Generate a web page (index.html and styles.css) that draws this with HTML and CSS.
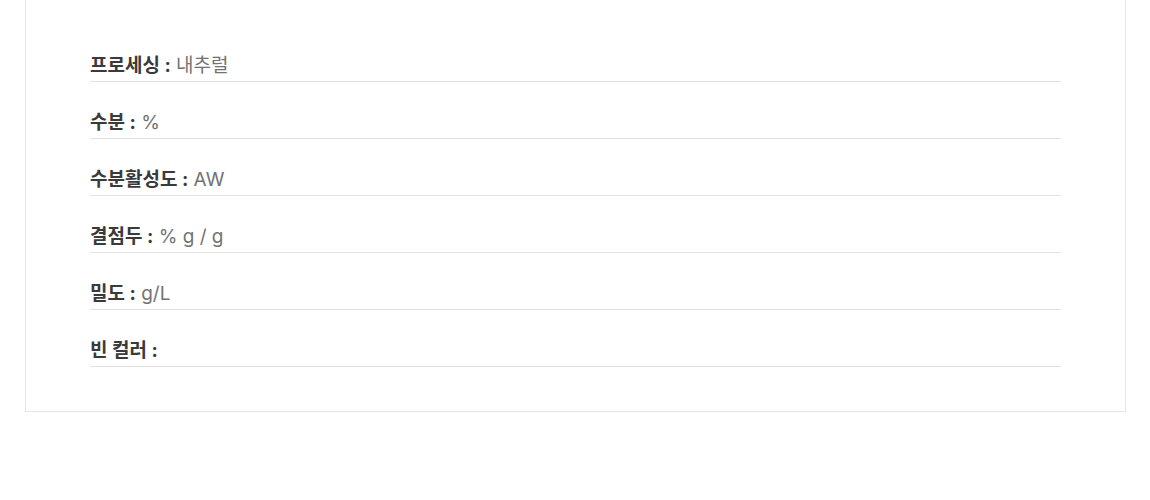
FILE: index.html
```html
<!DOCTYPE html>
<html lang="ko">
<head>
<meta charset="utf-8">
<link rel="stylesheet" href="styles.css">
</head>
<body>
<div class="card">
  <ul class="spec-list">
    <li class="spec-row"><span class="label">프로세싱 :</span> <span class="value">내추럴</span></li>
    <li class="spec-row"><span class="label">수분 :</span> <span class="value">%</span></li>
    <li class="spec-row"><span class="label">수분활성도 :</span> <span class="value">AW</span></li>
    <li class="spec-row"><span class="label">결점두 :</span> <span class="value">% g / g</span></li>
    <li class="spec-row"><span class="label">밀도 :</span> <span class="value">g/L</span></li>
    <li class="spec-row"><span class="label">빈 컬러 :</span> <span class="value"></span></li>
  </ul>
</div>
</body>
</html>
```

FILE: styles.css
```css
html, body {
  margin: 0;
  padding: 0;
  background: #ffffff;
}

body {
  font-family: "Inter", "Noto Sans CJK KR", "Noto Sans", sans-serif;
  color: #333333;
}

.card {
  margin: 0 24px 0 25px;
  border: 1px solid #e6e6e6;
  border-top: 0;
  padding: 25px 64px 44px 64px;
}

.spec-list {
  list-style: none;
  margin: 0;
  padding: 0;
}

.spec-row {
  margin-top: 28px;
  padding-bottom: 2px;
  border-bottom: 1px solid #e2e2e2;
  font-size: 19px;
  line-height: 26px;
  white-space: pre;
}

.label {
  font-weight: 700;
  color: #3a3a3a;
}

.value {
  font-weight: 400;
  color: #737373;
}
```
